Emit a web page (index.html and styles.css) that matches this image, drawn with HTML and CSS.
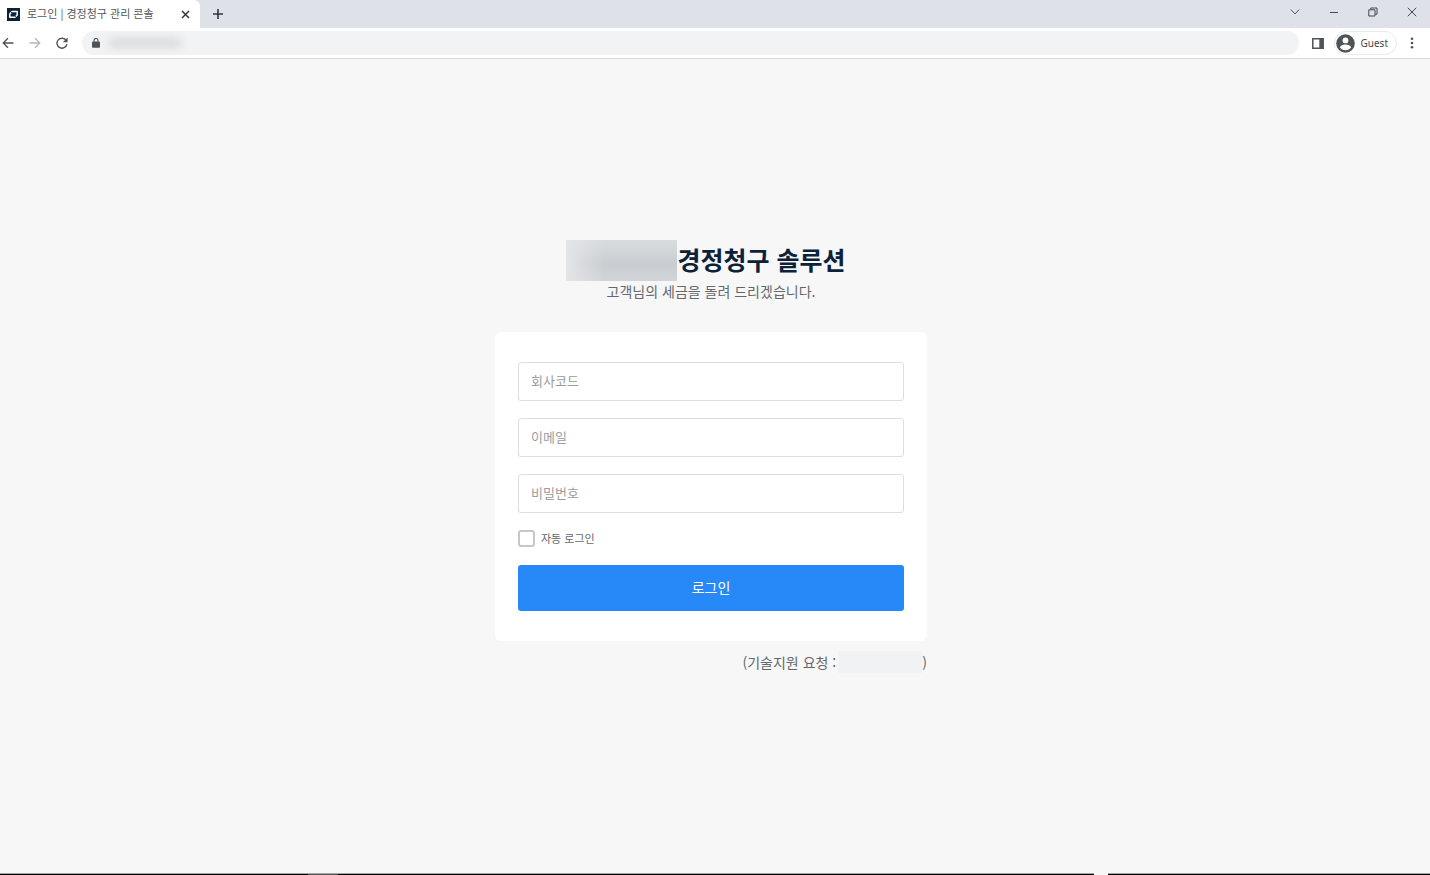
FILE: index.html
```html
<!DOCTYPE html>
<html lang="ko">
<head>
  <meta charset="UTF-8" />
  <meta name="viewport" content="width=device-width, initial-scale=1.0" />
  <title>로그인 | 경정청구 관리 콘솔</title>
  <link rel="stylesheet" href="styles.css">
</head>
<body>
  <header class="browser">
    <div class="tab-bar">
      <div class="tab">
        <svg class="favicon" width="13" height="13" viewBox="0 0 13 13">
          <rect width="13" height="13" fill="#0b2239" />
          <path d="M5 3.600H10.200V7L8 9.300H2.800V5.900z" fill="none" stroke="#fff" stroke-width="1.500" stroke-linejoin="round" />
          <path d="M3.200 3 5 5M9.800 10 8 8" stroke="#0b2239" stroke-width=".8" />
        </svg>
        <span class="tab-title">로그인 | 경정청구 관리 콘솔</span>
        <button class="icon-btn" aria-label="탭 닫기">
          <svg width="9" height="9" viewBox="0 0 9 9"><path d="M1 1l7 7M8 1L1 8" stroke="#333639" stroke-width="1.5" /></svg>
        </button>
      </div>
      <button class="icon-btn new-tab" aria-label="새 탭">
        <svg width="12" height="12" viewBox="0 0 12 12"><path d="M6 1v10M1 6h10" stroke="#333639" stroke-width="1.6" /></svg>
      </button>
      <div class="window-controls">
        <button class="icon-btn" aria-label="탭 검색">
          <svg width="10" height="10" viewBox="0 0 10 10"><path d="M.8 2.500 5 7l4.200-4.500" fill="none" stroke="#55585d" /></svg>
        </button>
        <button class="icon-btn" aria-label="최소화">
          <svg width="10" height="10" viewBox="0 0 10 10"><path d="M1 5.500h8" stroke="#44474b" /></svg>
        </button>
        <button class="icon-btn" aria-label="이전 크기로">
          <svg width="10" height="10" viewBox="0 0 10 10"><path d="M.8 2.800h6.200v6.200H.8zM2.800 2.500V1h6.200v6.200H7.300" fill="none" stroke="#44474b" /></svg>
        </button>
        <button class="icon-btn" aria-label="닫기">
          <svg width="10" height="10" viewBox="0 0 10 10"><path d="M.8.8l8.400 8.400M9.200.8L.8 9.200" stroke="#44474b" /></svg>
        </button>
      </div>
    </div>

    <div class="toolbar">
      <nav class="nav-buttons">
        <button class="icon-btn" aria-label="뒤로">
          <svg width="12" height="12" viewBox="0 0 12 12"><path d="M11.500 6H1.200M6 1.200 1.200 6 6 10.800" fill="none" stroke="#505357" stroke-width="1.300" /></svg>
        </button>
        <button class="icon-btn" aria-label="앞으로">
          <svg width="12" height="12" viewBox="0 0 12 12"><path d="M.5 6h10.300M6 1.200 10.800 6 6 10.800" fill="none" stroke="#b5b7ba" stroke-width="1.300" /></svg>
        </button>
        <button class="icon-btn" aria-label="새로고침">
          <svg width="12" height="12" viewBox="0 0 12 12"><path d="M10.200 3.500A5 5 0 1 0 10.900 7.200" fill="none" stroke="#505357" stroke-width="1.400" /><path d="M11.600.5v4.800H6.800z" fill="#505357" /></svg>
        </button>
      </nav>
      <div class="address-bar">
        <svg width="8" height="10" viewBox="0 0 8 10"><rect y="3.500" width="8" height="6.300" rx="1" fill="#505357" /><path d="M2 4V2.500a2 2 0 0 1 4 0V4" fill="none" stroke="#505357" stroke-width="1.100" /></svg>
        <span class="masked-url"></span>
      </div>
      <button class="icon-btn side-panel" aria-label="사이드 패널">
        <svg width="12" height="11" viewBox="0 0 12 11"><path d="M.8.8h10.400v9.400H.8z" fill="none" stroke="#505357" stroke-width="1.500" /><path d="M7.300 1H11v9H7.300z" fill="#505357" /></svg>
      </button>
      <button class="profile">
        <svg width="19" height="19" viewBox="0 0 19 19"><circle cx="9.500" cy="9.500" r="9.300" fill="#505357" /><circle cx="9.500" cy="6.400" r="2.900" fill="#fff" /><path d="M3.800 13.300c1-2 3.500-2.700 5.700-2.700s4.700.7 5.700 2.700c-1.300 1.800-3.300 2.900-5.700 2.900s-4.400-1.100-5.700-2.900z" fill="#fff" /></svg>
        Guest
      </button>
      <button class="icon-btn menu" aria-label="메뉴">
        <svg width="4" height="12" viewBox="0 0 4 12" fill="#505357"><circle cx="2" cy="1.700" r="1.300" /><circle cx="2" cy="6" r="1.300" /><circle cx="2" cy="10.300" r="1.300" /></svg>
      </button>
    </div>
  </header>

  <main class="page">
    <div class="login">
      <h1 class="title"><span class="masked-name"></span>경정청구 솔루션</h1>
      <p class="subtitle">고객님의 세금을 돌려 드리겠습니다.</p>

      <form class="card">
        <input class="field" type="text" placeholder="회사코드" aria-label="회사코드">
        <input class="field" type="email" placeholder="이메일" aria-label="이메일">
        <input class="field" type="password" placeholder="비밀번호" aria-label="비밀번호">
        <label class="remember"><input type="checkbox">자동 로그인</label>
        <button class="login-btn" type="button">로그인</button>
      </form>

      <p class="support">(기술지원 요청 : <span class="masked-phone"></span>)</p>
    </div>
  </main>

  <footer class="taskbar">
    <span class="bar-start"></span>
    <span class="bar-active"></span>
    <span class="bar-apps"></span>
    <span class="bar-tray"></span>
  </footer>
</body>
</html>
```
FILE: styles.css
```css
:root {
  --primary: #2788f7;
  --navy: #0b2239;
  --text: #64686d;
  --bg: #f7f7f7;
}

* {
  margin: 0;
  padding: 0;
  box-sizing: border-box;
}

body {
  font-family: "Noto Sans CJK KR", "Noto Sans", sans-serif;
  background: var(--bg);
  color: var(--text);
  display: flex;
  flex-direction: column;
  min-height: 100vh;
}

button,
input {
  font-family: inherit;
}

svg {
  display: block;
  flex: none;
}

.icon-btn {
  display: flex;
  align-items: center;
  justify-content: center;
  border: none;
  background: none;
}

/* browser window */
.browser {
  background: #fff;
  border-bottom: 1px solid #d9dadb;
}

.tab-bar {
  display: flex;
  align-items: center;
  height: 28px;
  background: #dee1e8;
}

.tab {
  display: flex;
  align-items: center;
  width: 200px;
  height: 28px;
  padding: 0 10px 0 7px;
  background: #fff;
  border-top-right-radius: 6px;
}

.tab-title {
  flex: 1;
  margin-left: 7px;
  padding-bottom: 2px;
  font-size: 11px;
  line-height: 16px;
  color: #55585c;
  white-space: nowrap;
}

.new-tab {
  margin-left: 12px;
}

.window-controls {
  display: flex;
  gap: 29px;
  margin-left: auto;
  padding: 0 13px 4px 0;
}

.toolbar {
  display: flex;
  align-items: center;
  height: 30px;
  padding: 0 16px 0 2px;
}

.nav-buttons {
  display: flex;
  gap: 15px;
}

.address-bar {
  display: flex;
  align-items: center;
  flex: 1;
  height: 24px;
  margin: 0 13px 0 14px;
  padding-left: 10px;
  border-radius: 12px;
  background: #f1f3f4;
}

.masked-url {
  width: 72px;
  height: 10px;
  margin-left: 9px;
  background: #d9dbdd;
  filter: blur(4px);
}

.profile {
  display: flex;
  align-items: center;
  gap: 6px;
  height: 24px;
  margin: 0 13px 0 10px;
  padding: 0 8px 0 1px;
  border: 1px solid #e8eaed;
  border-radius: 12px;
  background: #fff;
  font-family: "Noto Sans", sans-serif;
  font-size: 10px;
  color: #44474b;
}

/* login page */
.page {
  flex: 1;
  display: flex;
  justify-content: center;
  align-items: center;
  padding: 0 8px 19px 0;
}

.login {
  width: 100%;
  max-width: 432px;
}

.title {
  display: flex;
  justify-content: center;
  padding-right: 10px;
  font-size: 25px;
  line-height: 39px;
  font-weight: 700;
  color: var(--navy);
  white-space: nowrap;
}

.masked-name {
  width: 111px;
  height: 41px;
  background: linear-gradient(to right, #e3e5e7, transparent 35%), linear-gradient(#d9dcdf, #c9cdd1 60%, #d2d5d8);
}

.subtitle {
  font-size: 14px;
  line-height: 20px;
  text-align: center;
}

.card {
  display: flex;
  flex-direction: column;
  gap: 17px;
  margin-top: 31px;
  padding: 30px 23px;
  border-radius: 6px;
  background: #fff;
}

.field {
  width: 100%;
  height: 39px;
  padding: 0 12px 2px;
  border: 1px solid #dcdedf;
  border-radius: 3px;
  background: #fff;
  font-size: 13px;
  color: #333;
  outline: none;
}

.field::placeholder {
  color: #999c9e;
}

.field:focus {
  border-color: var(--primary);
}

.remember {
  display: flex;
  align-items: center;
  align-self: flex-start;
  gap: 6px;
  margin-bottom: 1px;
  font-size: 11px;
  line-height: 17px;
}

.remember input {
  appearance: none;
  width: 17px;
  height: 17px;
  border: 2px solid #c5c7c9;
  border-radius: 3px;
  background: #fff;
}

.remember input:checked {
  border-color: var(--primary);
  background: var(--primary);
}

.login-btn {
  height: 46px;
  padding-bottom: 2px;
  border: none;
  border-radius: 3px;
  background: var(--primary);
  color: #fff;
  font-size: 14px;
  cursor: pointer;
}

.support {
  display: flex;
  justify-content: flex-end;
  align-items: center;
  margin-top: 10px;
  font-size: 14px;
  line-height: 22px;
}

.masked-phone {
  width: 84px;
  height: 22px;
  margin-left: 2px;
  background: #f1f2f3;
}

/* top edge of the taskbar */
.taskbar {
  display: flex;
  height: 2px;
}

.taskbar span {
  border-top: 1px solid #a5a5a5;
  background: #050308;
}

.bar-start {
  width: 308px;
}

.taskbar .bar-active {
  width: 30px;
  background: #555;
}

.bar-apps {
  flex: 1;
  margin-right: 14px;
}

.bar-tray {
  width: 322px;
}
```
